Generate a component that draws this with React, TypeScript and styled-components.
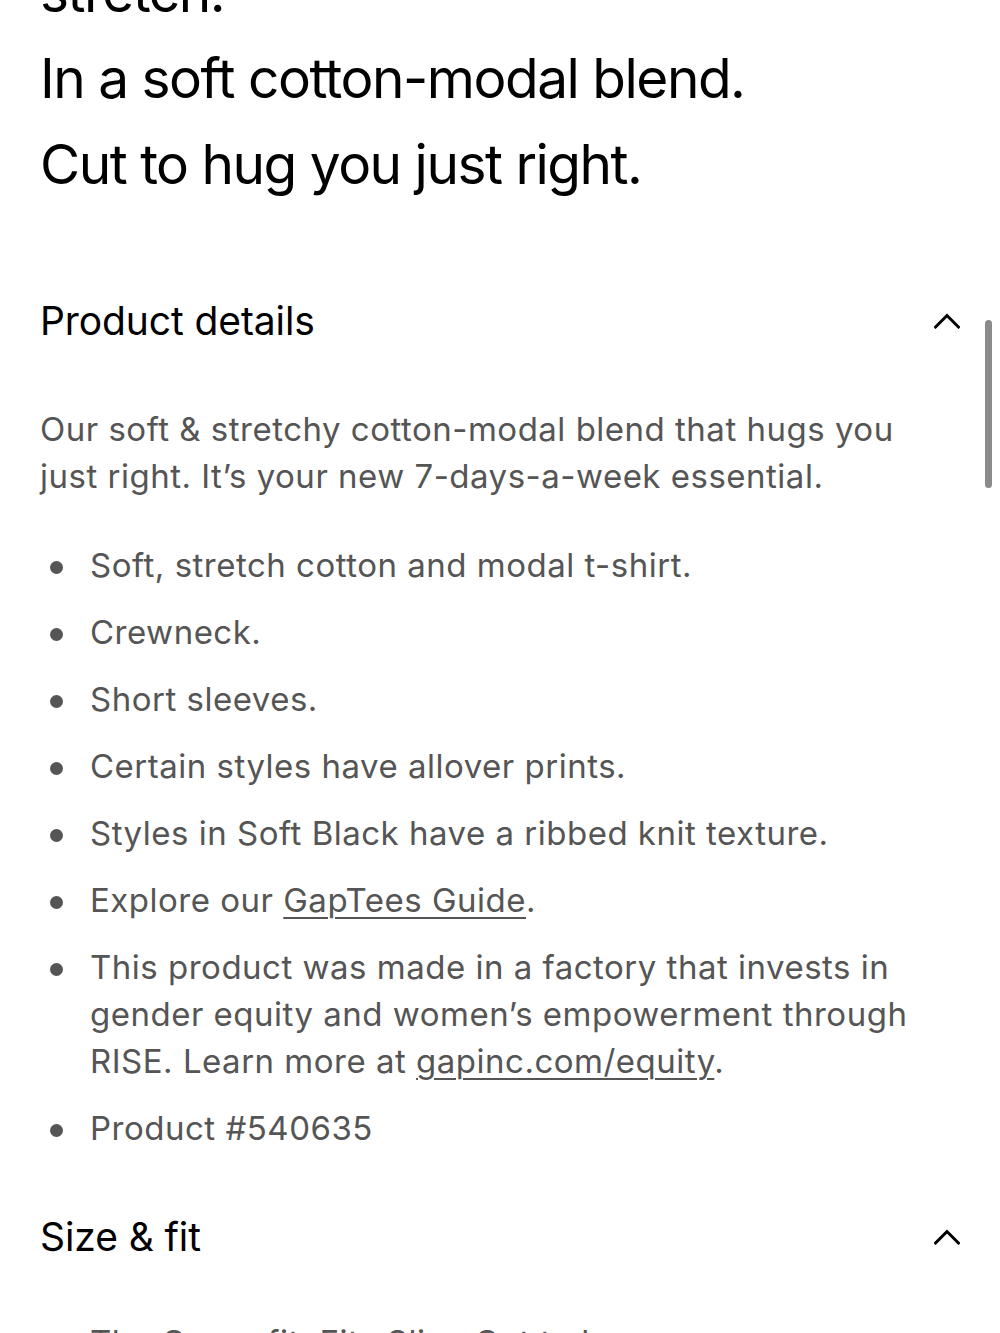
import React from "react";
import styled, { createGlobalStyle } from "styled-components";

const Global = createGlobalStyle`
  html, body {
    margin: 0;
    padding: 0;
    background: #ffffff;
    overflow: hidden;
  }
  body {
    font-family: Inter, "Noto Sans", "Liberation Sans", sans-serif;
    -webkit-font-smoothing: antialiased;
  }
`;

const Page = styled.main`
  width: 1000px;
  height: 1333px;
  overflow: hidden;
  padding: 0 40px;
  box-sizing: border-box;
`;

const Lead = styled.div`
  margin-top: -51px;
  font-size: 55px;
  line-height: 86px;
  color: #000;
  font-weight: 400;
  letter-spacing: -1.5px;
`;

const LeadLine = styled.div``;

const Section = styled.section<{ $gap: number }>`
  display: flex;
  flex-direction: column;
  margin-top: ${(p) => p.$gap}px;
`;

const SectionHeader = styled.button`
  display: flex;
  align-items: center;
  justify-content: space-between;
  width: 100%;
  padding: 0;
  border: 0;
  background: none;
  cursor: pointer;
  font-family: inherit;
  font-size: 39px;
  line-height: 48px;
  color: #000;
  letter-spacing: -0.1px;
  text-align: left;
`;

const Chevron = styled.svg`
  width: 26px;
  height: 16px;
  flex: none;
`;

const Body = styled.div<{ $gap: number }>`
  margin-top: ${(p) => p.$gap}px;
  color: #555555;
  font-size: 33px;
  line-height: 47px;
  letter-spacing: 0.5px;
`;

const Intro = styled.p`
  margin: 0 0 42px;
  max-width: 880px;
`;

const Bullets = styled.ul`
  list-style: none;
  margin: 0;
  padding: 0;
  display: flex;
  flex-direction: column;
  gap: 20px;
`;

const Bullet = styled.li`
  position: relative;
  padding-left: 50px;
  max-width: 830px;

  &::before {
    content: "";
    position: absolute;
    left: 10px;
    top: 19px;
    width: 13px;
    height: 13px;
    border-radius: 50%;
    background: #555555;
  }
`;

const Link = styled.a`
  color: inherit;
  text-decoration: underline;
  text-decoration-thickness: 2px;
  text-underline-offset: 5px;
`;

const Scrollbar = styled.div`
  position: fixed;
  right: 8px;
  top: 320px;
  width: 7px;
  height: 168px;
  border-radius: 4px;
  background: #8a8a8a;
`;

const ChevronUp = () => (
  <Chevron viewBox="0 0 26 16" aria-hidden>
    <path d="M1.5 14 L13 2.5 L24.5 14" fill="none" stroke="#000" strokeWidth="3" strokeLinecap="square" />
  </Chevron>
);

const details = [
  "Soft, stretch cotton and modal t-shirt.",
  "Crewneck.",
  "Short sleeves.",
  "Certain styles have allover prints.",
  "Styles in Soft Black have a ribbed knit texture.",
];

export default function App() {
  return (
    <>
      <Global />
      <Page>
        <Lead>
          <LeadLine>stretch.</LeadLine>
          <LeadLine>In a soft cotton-modal blend.</LeadLine>
          <LeadLine>Cut to hug you just right.</LeadLine>
        </Lead>

        <Section $gap={90}>
          <SectionHeader>
            <span>Product details</span>
            <ChevronUp />
          </SectionHeader>
          <Body $gap={61}>
            <Intro>
              Our soft &amp; stretchy cotton-modal blend that hugs you just right. It’s your new 7-days-a-week essential.
            </Intro>
            <Bullets>
              {details.map((d) => (
                <Bullet key={d}>{d}</Bullet>
              ))}
              <Bullet>
                Explore our <Link href="#">GapTees Guide</Link>.
              </Bullet>
              <Bullet>
                This product was made in a factory that invests in gender equity and women’s empowerment through RISE. Learn more at{" "}
                <Link href="#">gapinc.com/equity</Link>.
              </Bullet>
              <Bullet>Product #540635</Bullet>
            </Bullets>
          </Body>
        </Section>

        <Section $gap={61}>
          <SectionHeader>
            <span>Size &amp; fit</span>
            <ChevronUp />
          </SectionHeader>
          <Body $gap={58}>
            <Bullets>
              <Bullet>The Curve fit. Fits Slim. Cut to hug.</Bullet>
            </Bullets>
          </Body>
        </Section>
      </Page>
      <Scrollbar />
    </>
  );
}
